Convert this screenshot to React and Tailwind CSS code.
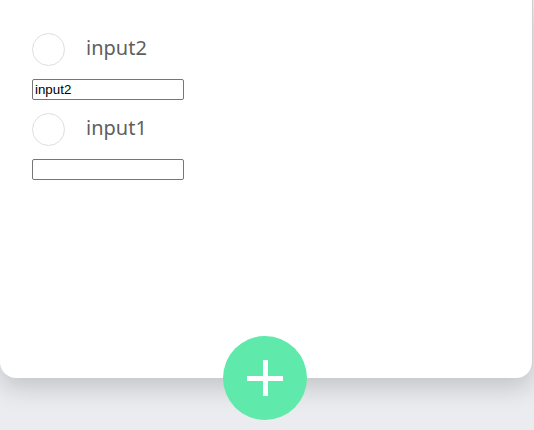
export default function App() {
  const items = [
    { label: "input2", value: "input2" },
    { label: "input1", value: "" },
  ];
  return (
    <div className="relative w-[534px] h-[430px] bg-[#ebecef] overflow-hidden">
      <div className="w-[533px] h-[378px] bg-white rounded-b-[16px] shadow-[0_10px_24px_rgba(0,0,0,0.17)] border-r border-[#d0d0d0] pl-[32px] pt-[33px] flex flex-col">
        {items.map((it) => (
          <div key={it.label} className="flex flex-col">
            <div className="flex items-center h-[32px]">
              <div className="w-[33px] h-[33px] rounded-full border border-[#dedede]" />
              <span className="ml-[21px] -mt-[2px] text-[20px] leading-none text-[#5f5f5f] font-['Noto_Sans',sans-serif] font-normal">
                {it.label}
              </span>
            </div>
            <input
              readOnly
              value={it.value}
              className="mt-[14px] mb-[13px] w-[152px] h-[21px] border border-[#767676] rounded-[2px] px-[2px] text-[13.33px] text-black font-['Liberation_Sans',Arial,sans-serif] outline-none"
            />
          </div>
        ))}
      </div>
      <div className="absolute left-[223px] top-[336px] w-[84px] h-[84px] rounded-full bg-[#5fe9ab] flex items-center justify-center">
        <svg width="36" height="36" viewBox="0 0 36 36">
          <rect x="0" y="16" width="36" height="5" fill="white" />
          <rect x="16" y="0" width="5" height="36" fill="white" />
        </svg>
      </div>
    </div>
  );
}
